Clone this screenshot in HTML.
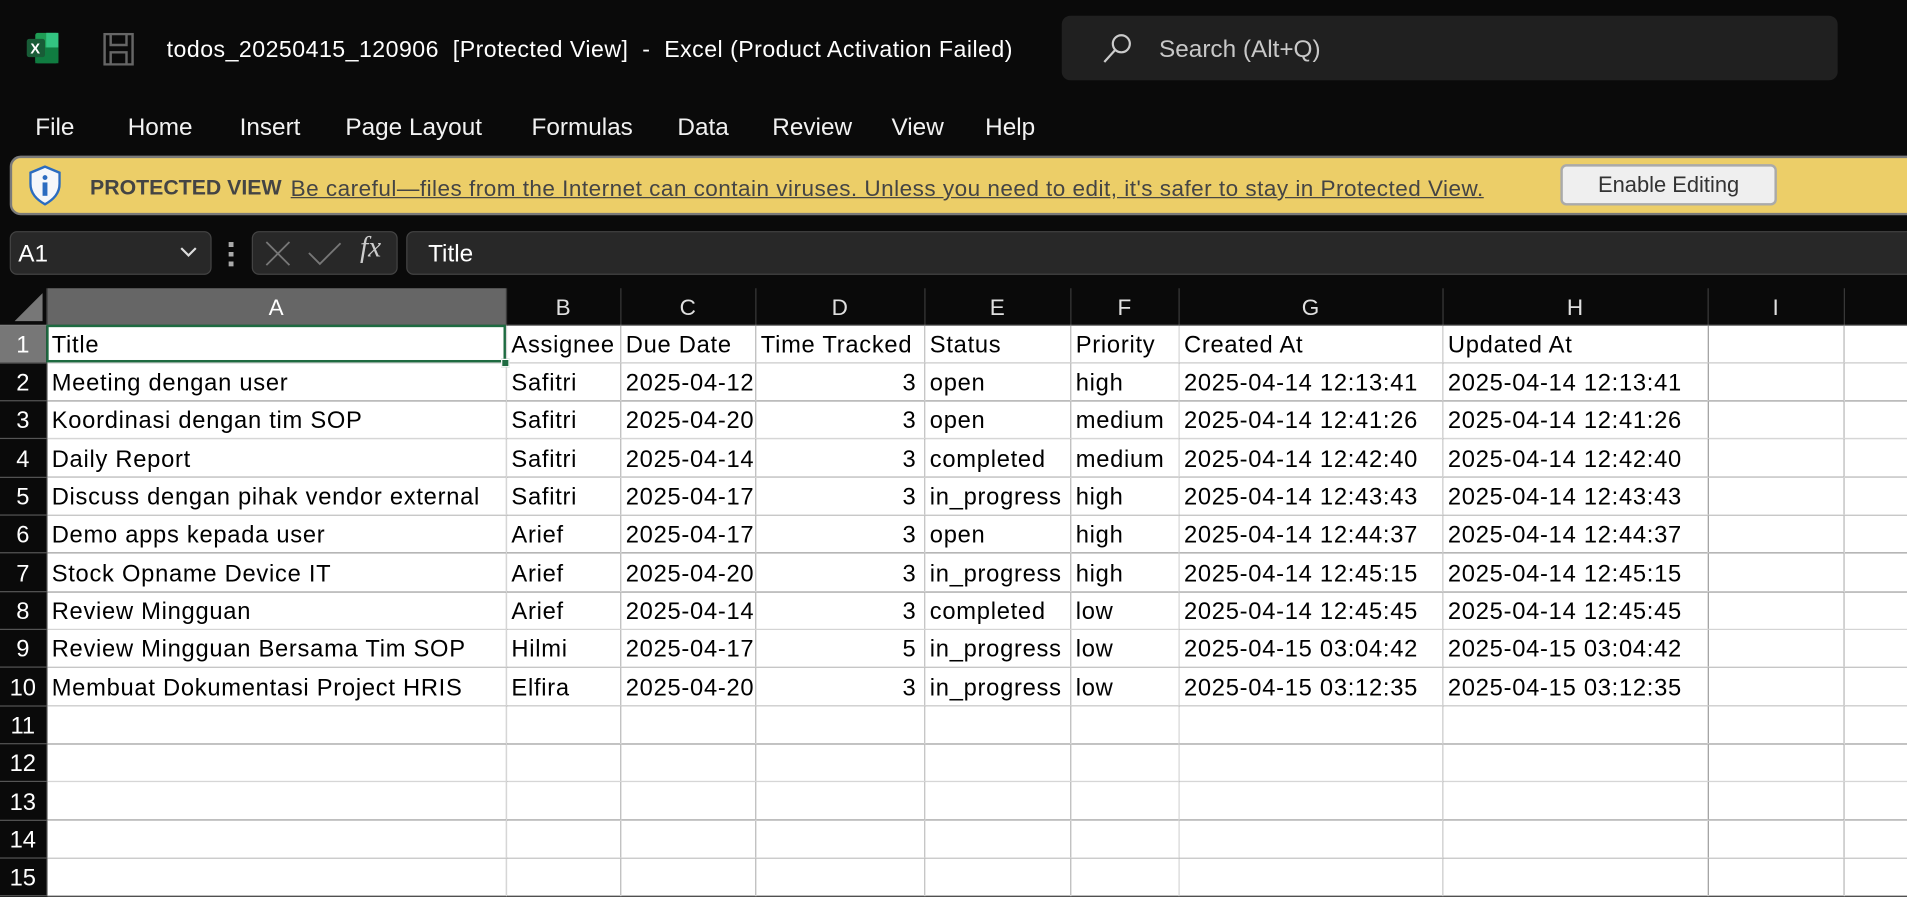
<!DOCTYPE html>
<html><head><meta charset="utf-8"><style>
*{margin:0;padding:0;box-sizing:border-box}
html,body{width:1907px;height:896px;overflow:hidden;background:#0a0a0a}
#w{position:absolute;left:0;top:0;width:1568px;height:737px;transform:scale(1.21620);transform-origin:0 0;font-family:"Liberation Sans",sans-serif;color:#fff}
.a{position:absolute;white-space:nowrap}
.menu span{position:absolute;top:94px;font-size:20px;color:#f2f2f2}
table{position:absolute;left:0;top:237px;width:1568px;border-collapse:collapse;table-layout:fixed}
td{height:31.33px;border-right:1px solid #d6d6d6;border-bottom:1px solid #d6d6d6;background:#fff;color:#000;font-size:19.5px;letter-spacing:0.6px;padding:3px 4px 0;overflow:hidden;white-space:nowrap;text-overflow:clip}
td.r{text-align:right;padding-right:6px}
td.h{background:#0a0a0a;color:#fff;text-align:center;border-right:1px solid #444;border-bottom:1px solid #555;padding:3px 0 0;letter-spacing:0}
tr.c td{height:30px;background:#0a0a0a;color:#e0e0e0;text-align:center;border-right:1px solid #3a3a3a;border-bottom:1px solid #888;font-size:18.5px;padding:2px 0 0;letter-spacing:0}
</style></head><body><div id="w">
<svg class="a" style="left:21px;top:26px" width="28" height="27" viewBox="0 0 28 27"><rect x="8" y="1" width="19" height="25" rx="2" fill="#1f9d55"/><rect x="8" y="13" width="19" height="13" fill="#107c41"/><rect x="17" y="1" width="10" height="12" fill="#33c481"/><rect x="1" y="6" width="15" height="15" rx="2" fill="#185c37"/><text x="4" y="18" font-size="12" font-weight="bold" fill="#fff" font-family="Liberation Sans">X</text></svg>
<svg class="a" style="left:84px;top:27px" width="27" height="27" viewBox="0 0 27 27" fill="none" stroke="#666" stroke-width="2"><path d="M2 1H25V26H2Z M7 1V10H20V1 M7 26V16H20V26"/></svg>
<div class="a" style="left:137px;top:31px;font-size:19px;letter-spacing:0.4px;color:#fff">todos_20250415_120906&nbsp;&nbsp;[Protected View]&nbsp;&nbsp;-&nbsp;&nbsp;Excel (Product Activation Failed)</div>
<div class="a" style="left:873px;top:13px;width:638px;height:53px;background:#202020;border-radius:7px"></div>
<svg class="a" style="left:905px;top:27px" width="28" height="26" viewBox="0 0 28 26" fill="none" stroke="#ccc" stroke-width="1.8"><circle cx="17" cy="9" r="7"/><path d="M12 14L3 24"/></svg>
<div class="a" style="left:953px;top:30px;font-size:20px;color:#c8c8c8">Search (Alt+Q)</div>
<div class="menu"><span style="left:29px">File</span><span style="left:105px">Home</span><span style="left:197px">Insert</span><span style="left:284px">Page Layout</span><span style="left:437px">Formulas</span><span style="left:557px">Data</span><span style="left:635px">Review</span><span style="left:733px">View</span><span style="left:810px">Help</span></div>
<div class="a" style="left:8px;top:128px;width:1580px;height:49px;background:#ecce68;border:2px solid #7a7a7a;border-radius:9px"></div>
<svg class="a" style="left:24px;top:136px" width="26" height="33" viewBox="0 0 26 33"><path d="M13 1L25 6V15C25 23 20 28 13 32C6 28 1 23 1 15V6Z" fill="#f5f7fa" stroke="#2b6cc0" stroke-width="2"/><circle cx="13" cy="10" r="2" fill="#2b6cc0"/><rect x="11" y="14" width="4" height="11" fill="#2b6cc0"/></svg>
<div class="a" style="left:74px;top:144px;font-size:17.5px;color:#444;font-weight:bold">PROTECTED VIEW</div>
<div class="a" style="left:239px;top:144px;font-size:18.5px;letter-spacing:0.4px;color:#444;text-decoration:underline">Be careful—files from the Internet can contain viruses. Unless you need to edit, it's safer to stay in Protected View.</div>
<div class="a" style="left:1283px;top:135px;width:178px;height:34px;background:#efefef;border:2px solid #aaa;border-radius:5px;font-size:18px;color:#333;text-align:center;line-height:31px">Enable Editing</div>
<div class="a" style="left:8px;top:190px;width:166px;height:36px;background:#282828;border:1px solid #444;border-radius:6px"></div>
<div class="a" style="left:15px;top:198px;font-size:20px">A1</div>
<svg class="a" style="left:147px;top:201px" width="16" height="12" viewBox="0 0 16 12" fill="none" stroke="#ddd" stroke-width="1.8"><path d="M2 3L8 9L14 3"/></svg>
<div class="a" style="left:188px;top:199px;width:4px;height:20px;background:repeating-linear-gradient(#aaa 0 4px,transparent 4px 8px)"></div>
<div class="a" style="left:207px;top:190px;width:120px;height:36px;background:#282828;border:1px solid #444;border-radius:6px"></div>
<svg class="a" style="left:217px;top:197px" width="24" height="24" stroke="#777" stroke-width="1.5"><path d="M2 2L21 21M21 2L2 21"/></svg>
<svg class="a" style="left:252px;top:197px" width="30" height="24" fill="none" stroke="#777" stroke-width="1.5"><path d="M2 11L11 20L28 3"/></svg>
<div class="a" style="left:296px;top:191px;font-size:24px;font-style:italic;font-family:'Liberation Serif',serif;color:#ccc">fx</div>
<div class="a" style="left:334px;top:190px;width:1250px;height:36px;background:#282828;border:1px solid #444;border-radius:6px"></div>
<div class="a" style="left:352px;top:198px;font-size:20px">Title</div>
<table>
<colgroup><col style="width:38px"><col style="width:378px"><col style="width:94px"><col style="width:111px"><col style="width:139px"><col style="width:120px"><col style="width:89px"><col style="width:217px"><col style="width:218px"><col style="width:112px"><col style="width:52px"></colgroup>
<tr class="c"><td style="position:relative"><svg style="position:absolute;right:2px;bottom:2px" width="24" height="24"><path d="M23 0V23H0Z" fill="#777"/></svg></td><td style="background:#666;color:#fff">A</td><td>B</td><td>C</td><td>D</td><td>E</td><td>F</td><td>G</td><td>H</td><td>I</td><td></td></tr>
<tr><td class="h" style="background:#777">1</td><td style="outline:2px solid #1e6b41;outline-offset:-2px;position:relative">Title</td><td>Assignee</td><td>Due Date</td><td>Time Tracked</td><td>Status</td><td>Priority</td><td>Created At</td><td>Updated At</td><td></td><td></td></tr>
<tr><td class="h">2</td><td>Meeting dengan user</td><td>Safitri</td><td>2025-04-12</td><td class="r">3</td><td>open</td><td>high</td><td>2025-04-14 12:13:41</td><td>2025-04-14 12:13:41</td><td></td><td></td></tr>
<tr><td class="h">3</td><td>Koordinasi dengan tim SOP</td><td>Safitri</td><td>2025-04-20</td><td class="r">3</td><td>open</td><td>medium</td><td>2025-04-14 12:41:26</td><td>2025-04-14 12:41:26</td><td></td><td></td></tr>
<tr><td class="h">4</td><td>Daily Report</td><td>Safitri</td><td>2025-04-14</td><td class="r">3</td><td>completed</td><td>medium</td><td>2025-04-14 12:42:40</td><td>2025-04-14 12:42:40</td><td></td><td></td></tr>
<tr><td class="h">5</td><td>Discuss dengan pihak vendor external</td><td>Safitri</td><td>2025-04-17</td><td class="r">3</td><td>in_progress</td><td>high</td><td>2025-04-14 12:43:43</td><td>2025-04-14 12:43:43</td><td></td><td></td></tr>
<tr><td class="h">6</td><td>Demo apps kepada user</td><td>Arief</td><td>2025-04-17</td><td class="r">3</td><td>open</td><td>high</td><td>2025-04-14 12:44:37</td><td>2025-04-14 12:44:37</td><td></td><td></td></tr>
<tr><td class="h">7</td><td>Stock Opname Device IT</td><td>Arief</td><td>2025-04-20</td><td class="r">3</td><td>in_progress</td><td>high</td><td>2025-04-14 12:45:15</td><td>2025-04-14 12:45:15</td><td></td><td></td></tr>
<tr><td class="h">8</td><td>Review Mingguan</td><td>Arief</td><td>2025-04-14</td><td class="r">3</td><td>completed</td><td>low</td><td>2025-04-14 12:45:45</td><td>2025-04-14 12:45:45</td><td></td><td></td></tr>
<tr><td class="h">9</td><td>Review Mingguan Bersama Tim SOP</td><td>Hilmi</td><td>2025-04-17</td><td class="r">5</td><td>in_progress</td><td>low</td><td>2025-04-15 03:04:42</td><td>2025-04-15 03:04:42</td><td></td><td></td></tr>
<tr><td class="h">10</td><td>Membuat Dokumentasi Project HRIS</td><td>Elfira</td><td>2025-04-20</td><td class="r">3</td><td>in_progress</td><td>low</td><td>2025-04-15 03:12:35</td><td>2025-04-15 03:12:35</td><td></td><td></td></tr>
<tr><td class="h">11</td><td></td><td></td><td></td><td></td><td></td><td></td><td></td><td></td><td></td><td></td></tr>
<tr><td class="h">12</td><td></td><td></td><td></td><td></td><td></td><td></td><td></td><td></td><td></td><td></td></tr>
<tr><td class="h">13</td><td></td><td></td><td></td><td></td><td></td><td></td><td></td><td></td><td></td><td></td></tr>
<tr><td class="h">14</td><td></td><td></td><td></td><td></td><td></td><td></td><td></td><td></td><td></td><td></td></tr>
<tr><td class="h">15</td><td></td><td></td><td></td><td></td><td></td><td></td><td></td><td></td><td></td><td></td></tr>
</table>
<div class="a" style="left:412px;top:295px;width:7px;height:7px;background:#1e6b41;border:1px solid #fff"></div>
</div></body></html>
